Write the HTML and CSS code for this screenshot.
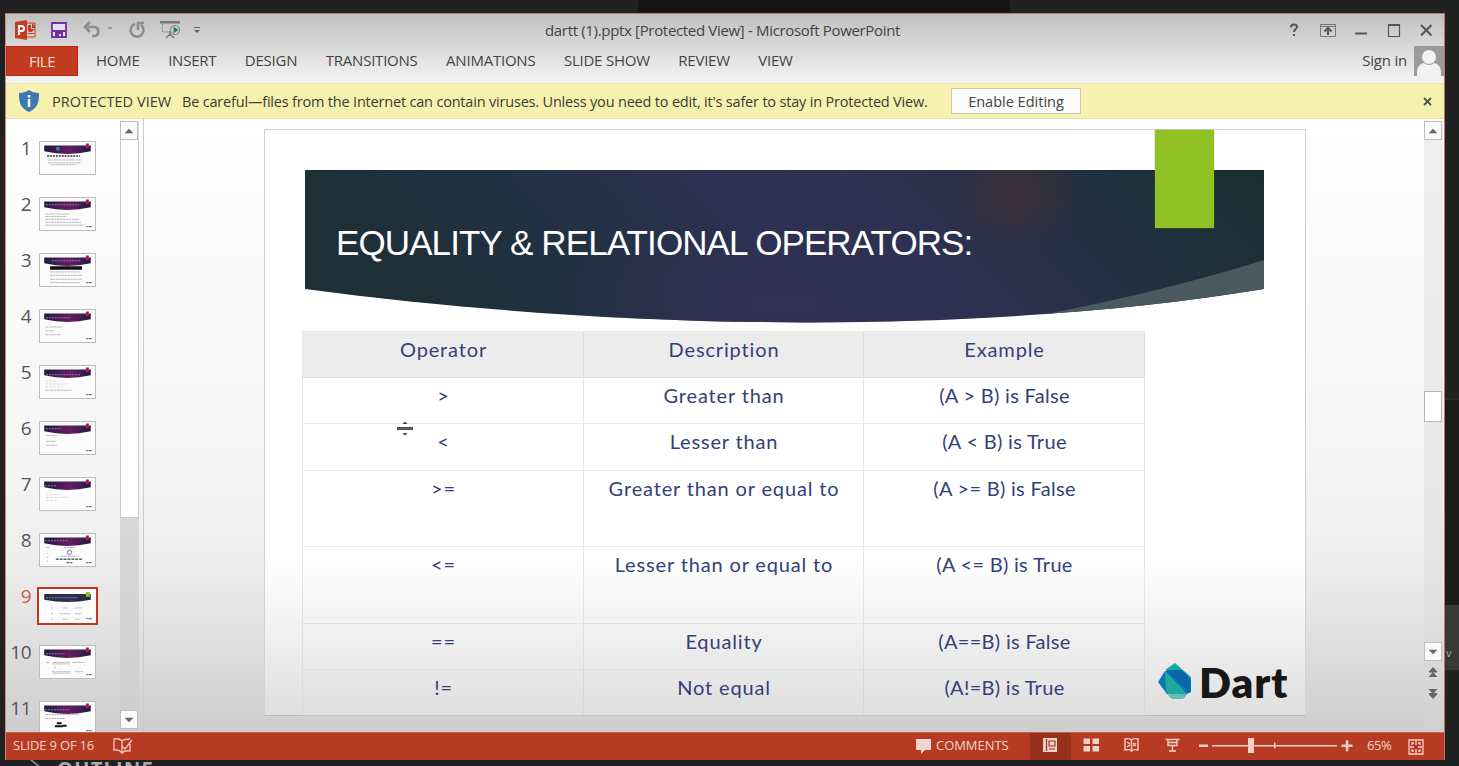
FILE: index.html
```html
<!DOCTYPE html>
<html lang="en">
<head>
<meta charset="utf-8">
<title>dartt (1).pptx [Protected View] - Microsoft PowerPoint</title>
<link rel="stylesheet" href="styles.css">
</head>
<body>
<div class="backdrop-top"></div>
<div class="backdrop-side"><span>v</span></div>
<div class="backdrop-outline"><svg width="12" height="10" viewBox="0 0 12 10"><path d="M1 0l10 8" stroke="#999" stroke-width="1.5"/></svg><span>OUTLINE</span></div>
<main class="window">
  <header class="titlebar">
    <div class="quick">
      <svg width="22" height="22" viewBox="0 0 22 22"><path fill="#c63c21" d="M0 3L12 1v20L0 19z"/><path fill="none" stroke="#c63c21" d="M12 4h8v14h-8"/><path fill="#c63c21" d="M13 6h3v4h3a3.5 3.500 0 0 1-6 2zM17 5a3.500 3.500 0 0 1 3 4h-3zM13 14h6v1h-6z"/><path fill="none" stroke="#fff" stroke-width="2" d="M4 16V7h2.500a2 2 0 0 1 0 5H4"/></svg>
      <svg class="save" width="16" height="16" viewBox="0 0 16 16"><path fill="#e8dfee" stroke="#7131a0" stroke-width="1.800" d="M1 1h14v14H1z"/><path fill="#7131a0" d="M1 8h14v2H1zM4 10h8v5h-2v-3H8v3H4z"/></svg>
      <svg class="undo" width="30" height="18" viewBox="0 0 30 18"><path fill="none" stroke="#8d8d8d" stroke-width="2.600" d="M2 6h10a4.700 4.700 0 0 1 0 9H9M7 1L2 6l5 5"/><path fill="#999" d="M24 6h6l-3 3z"/></svg>
      <svg class="redo" width="18" height="18" viewBox="0 0 18 18"><path fill="none" stroke="#8d8d8d" stroke-width="2.500" d="M7 3a6.500 6.500 0 1 0 6 1M10 9V2h6"/></svg>
      <svg class="show" width="22" height="20" viewBox="0 0 22 20"><path fill="#777" d="M0 1h20v2.500H0z"/><path fill="none" stroke="#888" stroke-dasharray="2 1" d="M2.500 4v8h8"/><path fill="none" stroke="#777" stroke-width="1.500" d="M6 18l4-4 4 4M10 11v5"/><circle cx="15" cy="10" r="4.500" fill="#c9d6cf" stroke="#777"/><path fill="#25835b" d="M13.500 6.500v7l5-3.500z"/></svg>
      <svg class="more" width="6" height="8" viewBox="0 0 6 8"><path fill="#666" d="M0 1h6v1H0zM0 4h6L3 7z"/></svg>
    </div>
    <div class="title">dartt (1).pptx [Protected View] - Microsoft PowerPoint</div>
    <svg class="wincontrols" width="144" height="20" viewBox="0 0 144 20"><g fill="none" stroke="#555" stroke-width="2"><path d="M2 7.500q0-3 3-3 3.200 0 3 2.500c0 2-3 2-3 5M5 14v2"/><path stroke-width="1" stroke="#777" d="M31.500 4.500h15v12h-15zM31 6.500h16"/><path d="M39 15V9M35.500 11.500L39 8l3.500 3.500"/><path d="M66 13.500h12"/><path stroke-width="1.200" d="M99.500 5.500h11v11h-11z"/><path d="M99 5h12M132 5l10.500 10.500M142.500 5L132 15.500"/></g></svg>
  </header>
  <nav class="tabs">
    <span class="file">FILE</span>
    <div class="tablist"><span>HOME</span><span>INSERT</span><span>DESIGN</span><span>TRANSITIONS</span><span>ANIMATIONS</span><span>SLIDE SHOW</span><span>REVIEW</span><span>VIEW</span></div>
    <span class="signin">Sign in</span>
    <svg class="avatar" width="30" height="30" viewBox="0 0 30 30"><path fill="#9b9b9b" d="M0 0h30v30H0z"/><circle cx="15" cy="11" r="7" fill="#f2f2f2"/><path fill="#f2f2f2" d="M3 30V25q1-7 7-8q5 4 10 0q6 1 7 8v5z"/></svg>
  </nav>
  <section class="notice">
    <svg width="20" height="22" viewBox="0 0 20 22"><path fill="#3d78b5" d="M10 0q4 3 10 3c0 9-1 15-10 19C1 18 0 12 0 3q6 0 10-3z"/><path fill="#fff" d="M8.800 5h2.500v2.500H8.800zM8.800 9h2.500v8H8.800z"/></svg>
    <span class="notice-head">PROTECTED VIEW</span>
    <span class="notice-text">Be careful—files from the Internet can contain viruses. Unless you need to edit, it's safer to stay in Protected View.</span>
    <button class="enable">Enable Editing</button>
    <svg class="dismiss" width="9" height="9" viewBox="0 0 9 9"><path d="M1 1l7 7M8 1L1 8" stroke="#555" stroke-width="1.900"/></svg>
  </section>
  <section class="work">
    <svg class="defs" width="0" height="0"><defs>
      <linearGradient id="purple"><stop offset="0" stop-color="#211a3d"/><stop offset=".55" stop-color="#641d64"/><stop offset="1" stop-color="#211a3d"/></linearGradient>
      <linearGradient id="teal"><stop offset="0" stop-color="#1d3038"/><stop offset=".55" stop-color="#303155"/><stop offset="1" stop-color="#1d3038"/></linearGradient>
      <symbol id="cap" viewBox="0 0 56 33"><path fill="url(#purple)" d="M4 3.500h48v6Q28 15 4 9.500z"/><path fill="#b51553" d="M47 1.500h3v5h-3z"/></symbol>
      <symbol id="mark" viewBox="0 0 56 33"><path stroke="#45a6ae" stroke-width="1.500" d="M47 29.500h2.500"/><path stroke="#777" stroke-width="1.500" d="M50 29.500h3"/></symbol>
    </defs></svg>
    <aside class="thumbs">
      <div class="thumb"><b>1</b><svg viewBox="0 0 56 33"><use href="#cap"/><circle cx="18" cy="7" r="2" fill="#2685b0"/><path class="strong" d="M7 14.500h34"/><path class="copy" d="M8 18.500h35M8 21.500h34M11 23.500h26"/></svg></div>
      <div class="thumb"><b>2</b><svg viewBox="0 0 56 33"><use href="#cap"/><use href="#mark"/><path class="head" d="M6 7h34"/><path class="copy" d="M5 16.500h25M5 19h22M5 22h35M5 25h37M5 28h40"/></svg></div>
      <div class="thumb"><b>3</b><svg viewBox="0 0 56 33"><use href="#cap"/><use href="#mark"/><path class="head" d="M12 7h30"/><path stroke="#111" stroke-width="3.500" d="M10 14.500h33"/><path class="copy" d="M10 18.500h31M10 22h33M10 26h33M10 29.500h31"/></svg></div>
      <div class="thumb"><b>4</b><svg viewBox="0 0 56 33"><use href="#cap"/><use href="#mark"/><path class="head" d="M6 8h25"/><path class="copy" d="M5 17.500h17M5 21.500h9M5 25.500h16"/></svg></div>
      <div class="thumb"><b>5</b><svg viewBox="0 0 56 33"><use href="#cap"/><use href="#mark"/><path class="head" d="M6 9h36"/><path class="faint" d="M5 15.500h12M5 18.500h25M5 21.500h18"/><path class="copy" d="M5 25h28"/></svg></div>
      <div class="thumb"><b>6</b><svg viewBox="0 0 56 33"><use href="#cap"/><use href="#mark"/><path class="head" d="M6 7h16"/><path class="copy" d="M6 14h11M6 20h10M6 24h11"/></svg></div>
      <div class="thumb"><b>7</b><svg viewBox="0 0 56 33"><use href="#cap"/><use href="#mark"/><path class="head" d="M5 8h12"/><path class="faint" d="M6 17h14M6 20h22M6 23h12"/></svg></div>
      <div class="thumb"><b>8</b><svg viewBox="0 0 56 33"><use href="#cap"/><use href="#mark"/><path class="head" d="M5 7h23"/><path class="copy" d="M6 14h4M24 14h12M7 20h1M7 24h1M7 28h1M21 23h18"/><circle cx="30" cy="19" r="2.200" fill="none" stroke="#6179aa"/><path stroke="#566" stroke-width="1.500" stroke-dasharray="3 1" d="M16 26h28M27 29.500h6"/></svg></div>
      <div class="thumb selected"><b>9</b><svg viewBox="0 0 56 33"><path fill="url(#teal)" d="M4 4h48v6Q28 15 4 10z"/><path fill="#8dbf27" d="M47 2h4v5h-4z"/><use href="#mark"/><path class="head" d="M6 8h33"/><path class="copy" d="M11 18.500h2M23 18.500h5M36 18.500h7M11 24.500h2M20 24.500h11M36 24.500h7M11 30h2M23 30h5M36 30h6"/></svg></div>
      <div class="thumb"><b>10</b><svg viewBox="0 0 56 33"><use href="#cap"/><use href="#mark"/><path class="head" d="M6 8h19"/><path class="copy" d="M6 17h4M13 17h17M33 17h13M12 18.500h19M14 22h2M12 26.500h19M36 26.500h8M13 28h18"/></svg></div>
      <div class="thumb"><b>11</b><svg viewBox="0 0 56 33"><use href="#cap"/><use href="#mark"/><path class="head" d="M5 8h25"/><path class="copy" d="M5 13h35M5 17h20"/><path stroke="#111" stroke-width="2" d="M17 22h5M15 25h8M23 24.500h4"/></svg></div>
    </aside>
    <div class="scroll left-scroll"><svg class="arrow" viewBox="0 0 18 18"><path d="M4 12l5-5 5 5z"/></svg><i></i><svg class="arrow down" viewBox="0 0 18 18"><path d="M4 7h10l-5 5z"/></svg></div>
    <div class="stage">
      <article class="slide">
        <div class="banner">
          <svg width="959" height="153" viewBox="0 0 959 153"><defs><linearGradient id="ban" x1="0" x2="1" y1=".15" y2="0"><stop offset="0" stop-color="#1e2f37"/><stop offset=".22" stop-color="#223142"/><stop offset=".42" stop-color="#2b3152"/><stop offset=".57" stop-color="#2d3152"/><stop offset=".78" stop-color="#22303f"/><stop offset="1" stop-color="#192e32"/></linearGradient><radialGradient id="glow"><stop offset="0" stop-color="#3d2f3a"/><stop offset="1" stop-color="#3d2f3a" stop-opacity="0"/></radialGradient><radialGradient id="violet"><stop offset="0" stop-color="#353158"/><stop offset="1" stop-color="#303153" stop-opacity="0"/></radialGradient><clipPath id="bc"><path d="M0 0H959V119C690 163 340 164 0 119z"/></clipPath></defs><g clip-path="url(#bc)"><path fill="url(#ban)" d="M0 0h959v153H0z"/><ellipse cx="470" cy="135" rx="220" ry="90" fill="url(#violet)"/><ellipse cx="708" cy="25" rx="72" ry="56" fill="url(#glow)"/><path fill="#4a5960" d="M725 147Q850 124 959 90V125Q840 142 725 151z"/></g></svg>
          <h1>EQUALITY &amp; RELATIONAL OPERATORS:</h1>
        </div>
        <div class="green"></div>
        <div class="ops">
          <div class="h">Operator</div><div class="h">Description</div><div class="h">Example</div>
          <div>&gt;</div><div>Greater than</div><div class="ex">(A &gt; B) is False</div>
          <div>&lt;</div><div>Lesser than</div><div class="ex">(A &lt; B) is True</div>
          <div>&gt;=</div><div>Greater than or equal to</div><div class="ex">(A &gt;= B) is False</div>
          <div>&lt;=</div><div>Lesser than or equal to</div><div class="ex">(A &lt;= B) is True</div>
          <div>==</div><div>Equality</div><div class="ex">(A==B) is False</div>
          <div>!=</div><div>Not equal</div><div class="ex">(A!=B) is True</div>
        </div>
        <svg class="cursor" width="16" height="15" viewBox="0 0 16 15"><path fill="#444" d="M0 6h16v3H0zM5.500 3L8 .5 10.500 3zM5.500 12L8 14.500l2.500-2.500z"/><path fill="#888" d="M1 7.200h14v.6H1z"/></svg>
        <div class="dart"><svg width="34" height="36" viewBox="0 0 34 36"><path fill="#0b75b8" d="M0 19L7 8h17l9 8v13l-6 3L9 31z"/><path fill="#18aaa0" d="M7 7L17 0l8 7L33 14v4L24 7z"/><path fill="#20a99f" d="M7 8l22 23-3 4H13L8 28z"/><path fill="#65bdb9" d="M9 31h20l-4 5H14z"/><path fill="#0867aa" d="M8 7h16l8 8v15z"/></svg><span>Dart</span></div>
      </article>
    </div>
    <div class="scroll right-scroll"><svg class="arrow" viewBox="0 0 18 18"><path d="M4 12l5-5 5 5z"/></svg><i></i><svg class="arrow down" viewBox="0 0 18 18"><path d="M4 7h10l-5 5z"/></svg>
      <svg class="jump" width="18" height="50" viewBox="0 0 18 50"><path fill="#666" d="M4.500 11L9 6l4.500 5zM4.500 16L9 11l4.500 5zM5 10h8v1.500H5zM4.500 28h9L9 33zM4.500 33h9L9 38zM5 32h8v1.500H5z"/></svg></div>
  </section>
  <footer class="status">
    <span class="count">SLIDE 9 OF 16</span>
    <svg class="book" width="20" height="17" viewBox="0 0 20 17"><path fill="none" stroke="#efc9bf" stroke-width="1.300" d="M9 4Q6 1 1 2v11q5-1 8 3zM9 4q2-2 8-2M17 7v7q-5-1-8 2M9 9l3 3 7-9"/></svg>
    <svg class="bubble" width="15" height="16" viewBox="0 0 15 16"><path fill="#f1d6cf" d="M0 0h15v11H9l-4 4v-4H0z"/></svg>
    <span class="comments">COMMENTS</span>
    <svg class="views" width="330" height="28" viewBox="0 0 330 28"><path fill="#99301c" d="M0 0h41v27H0z"/><g fill="#f1d1c8"><path d="M13 5h14v14H13zM53.500 5.500H60V11h-6.500zM62.500 5.500H69V11h-6.500zM53.500 13H60v5.500h-6.500zM62.500 13H69v5.500h-6.500z"/><path d="M182 12h125v1.500H182zM169 11.500h9V14h-9zM218 5h6v15h-6zM244 9.500h1.500v6H244zM311.500 11.500h11V14h-11zM315.800 7.300h2.500v11h-2.500z"/></g><g fill="none" stroke="#9d321e" stroke-width="1.200"><path d="M16.500 6v12M19 8h6v5h-6zM19 16h6"/></g><g fill="none" stroke="#f1d1c8" stroke-width="1.400"><path d="M95 6q5-1 6.500 1Q103 5 108 6v11q-5-1-6.500 1Q100 16 95 17zM101.500 7v11M97 9l3 2M97 14l3-2M103 10l3 3M106 10l-3 3"/><path d="M135.500 6.500h14M138 6.500v6h9v-6M138 9.500h9M142.500 12.500v5M139 18h7"/></g></svg>
    <span class="zoomval">65%</span>
    <svg class="fit" width="16" height="16" viewBox="0 0 16 16"><path fill="none" stroke="#f4d0c8" stroke-width="1.300" d="M1 1h14v14H1zM8 2v4M8 10v4M2 8h4M10 8h4M4 6V4h2M10 4h2v2M4 10v2h2M10 12h2v-2"/></svg>
  </footer>
</main>
</body>
</html>
```

FILE: styles.css
```css
* { box-sizing: border-box; }
body { margin: 0; width: 1459px; height: 766px; overflow: hidden; position: relative; background: #202222; padding: 13px 14px 6px 5px; font-family: "Open Sans", "Noto Sans", sans-serif; color: #444; }
svg { display: block; flex: none; }
.backdrop-top { position: absolute; left: 380px; top: 0; width: 630px; height: 12px; background: linear-gradient(90deg, #202222 41%, #151515 41%); }
.backdrop-side { position: absolute; left: 1445px; top: 398px; width: 14px; height: 272px; border-top: 2px solid #2b2b2b; background: linear-gradient(#1c1c1c 76%, #383838 76%); font-size: 11px; color: #aaa; padding: 246px 0 0 1px; line-height: 14px; }
.backdrop-outline { position: absolute; left: 30px; top: 760px; display: flex; gap: 15px; color: #aaa; font-weight: 700; font-size: 20px; line-height: 18px; letter-spacing: 1.3px; }
.window { position: relative; width: 1440px; height: 747px; border: 1px solid #bf7468; border-width: 1px 1px 0; border-left-color: #ca8a80; display: flex; flex-direction: column; background: linear-gradient(#c0c0c0, #f5f5f5 70px); }
.titlebar { height: 32px; display: flex; align-items: center; }
.quick { display: flex; align-items: center; padding-left: 9px; flex: 1; }
.save { margin-left: 14px; }
.undo { margin-left: 16px; }
.redo { margin-left: 15px; }
.show { margin-left: 14px; }
.more { margin-left: 12px; }
.title { font-size: 15px; line-height: 30px; white-space: nowrap; width: 356px; letter-spacing: -.33px; }
.wincontrols { margin-left: 388px; margin-right: 11px; }
.tabs { height: 30px; display: flex; align-items: center; font-size: 15px; line-height: 28px; }
.file { width: 72px; height: 30px; background: #c13c20; border: 1px solid #bd2214; color: #f6ded8; text-align: center; line-height: 28px; letter-spacing: -.5px; }
.tablist { display: flex; gap: 28.500px; margin-left: 18px; flex: 1; letter-spacing: -.23px; white-space: nowrap; height: 30px; }
.signin { letter-spacing: -.2px; margin-right: 7px; height: 30px; }
.notice { margin-top: 7px; height: 36px; background: #f7f1b0; border-top: 1px solid #e7e1aa; border-bottom: 1px solid #deddb4; display: flex; align-items: center; padding-left: 13px; font-size: 14.500px; white-space: nowrap; color: #3c3c35; }
.notice-head { width: 120px; margin-left: 13px; font-weight: 500; letter-spacing: .05px; }
.notice-text { width: 746px; margin-left: 10px; letter-spacing: -.19px; }
.enable { margin-left: 23px; width: 130px; height: 26px; border: 1px solid #c9c7af; background: #fbfbfb; font: 14.500px/24px "Open Sans", sans-serif; color: #444; padding: 1px 0 0; letter-spacing: 0; }
.dismiss { margin-left: auto; margin-right: 12px; }
.work { height: 613px; display: flex; background: linear-gradient(#fff, #f4f4f4 60%, #ececec 74%, #cecece); overflow: hidden; }
.defs { position: absolute; }
.thumbs { width: 115px; padding-top: 22px; height: 613px; overflow: hidden; }
.thumb { display: flex; height: 56px; }
.thumb b { width: 25px; text-align: right; font-weight: 400; font-size: 19px; line-height: 18px; letter-spacing: -.5px; margin-top: -2px; color: #555; }
.thumb svg { width: 57px; height: 34px; border: 1px solid #bdbdbd; background: #fcfcfc; margin-left: 7.500px; }
.selected b { color: #cf573e; }
.selected svg { outline: 2px solid #cb321b; border-color: #fff; }
.head { stroke: #b6b0c6; stroke-width: 1; stroke-dasharray: 2 1; opacity: .7; }
.copy { stroke: #858591; stroke-width: .8; stroke-dasharray: 3 .5 2 .5; fill: none; opacity: .75; }
.faint { stroke: #aaa; stroke-width: .7; opacity: .6; stroke-dasharray: 3 1; }
.strong { stroke: #333; stroke-width: 1.500; stroke-dasharray: 2 1; }
.scroll { display: flex; flex-direction: column; flex: none; }
.arrow { width: 18px; height: 19px; border: 1px solid #bebebe; background: #fafafa; }
.arrow path { fill: #666; }
.left-scroll { width: 19px; margin: 2px 0 3px -1px; background: rgba(205,205,205,.7); }
.left-scroll i { height: 378px; background: #fff; border: 1px solid #cacaca; border-top: 0; }
.left-scroll .down { margin-top: auto; }
.stage { flex: 1; margin-left: 4px; border-left: 1px solid #cacaca; padding: 10px 0 0 120px; }
.slide { position: relative; width: 1042px; height: 587px; border: 1px solid #d2d2d2; border-bottom-color: #bbb; background: linear-gradient(#fff 73%, #f4f4f4 83%, #dfdfdf); padding: 40px 0 0 38px; }
.banner { position: relative; width: 959px; height: 153px; margin-left: 2px; }
.banner h1 { position: absolute; left: 31px; top: 52px; margin: 0; color: #fff; font: 400 35px/42px "Liberation Sans", Arial, sans-serif; white-space: nowrap; letter-spacing: -.9px; }
.green { position: absolute; left: 890px; top: 0; width: 59px; height: 98px; background: #90c226; box-shadow: 0 0 1px #6c922b; }
.ops { margin: 8px 0 0 -1px; width: 842px; height: 384px; display: grid; grid-template-columns: 281px 280px 281px; grid-template-rows: 46px 46px 47px 76px 77px 46px 46px; border-left: 1px solid rgba(205,205,205,.5); border-top: 1px solid #e7e7e7; font: 20px/34px Lato, sans-serif; color: #35407a; text-align: center; letter-spacing: .85px; }
.ops div { border-right: 1px solid rgba(205,205,205,.5); border-bottom: 1px solid rgba(205,205,205,.45); white-space: nowrap; padding-left: 1px; }
.ops .ex { letter-spacing: .3px; }
.ops .h { background: #ececec; }
.cursor { position: absolute; left: 132px; top: 291px; }
.dart { position: absolute; left: 893px; top: 533px; display: flex; color: #171717; }
.dart span { font: 800 42px/42px Lato, sans-serif; letter-spacing: 1px; margin: -2px 0 0 7px; }
.right-scroll { width: 19px; margin: 2px 1px 4px 0; background: rgba(215,215,215,.4); }
.right-scroll i { height: 31px; border: 1px solid #b5b5b5; background: #fff; margin-top: 251px; width: 18px; }
.right-scroll .down { margin-top: 220px; }
.status { height: 28px; background: #b63b22; display: flex; align-items: center; color: #f1d5cd; font-size: 13px; line-height: 24px; white-space: nowrap; border-top: 1px solid #c95f4a; }
.status > span { height: 27px; }
.count { width: 82px; margin-left: 7px; letter-spacing: -.18px; }
.book { margin: -2px 0 0 18px; }
.bubble { margin-left: auto; }
.comments { width: 74px; margin-left: 5px; letter-spacing: -.05px; margin-right: 20px; }
.views { width: 330px; }
.zoomval { width: 28px; margin-left: 7px; letter-spacing: -.4px; }
.fit { margin-left: 13px; margin-right: 20px; }
```
